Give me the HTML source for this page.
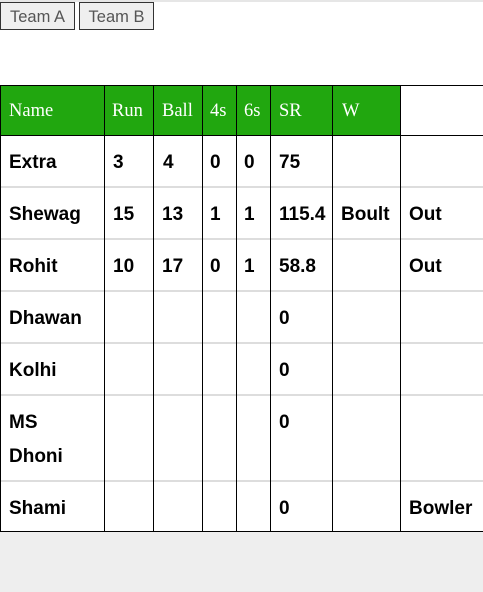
<!DOCTYPE html>
<html><head><style>
html,body{margin:0;padding:0;width:483px;height:592px;background:#eeeeee;overflow:hidden;position:relative;font-family:"Liberation Sans",sans-serif}
#w{position:absolute;left:0;top:0;width:483px;height:532px;background:#fff}
#tl{position:absolute;left:0;top:0;width:483px;height:2px;background:#e6e6e6}
.btn{position:absolute;top:2px;height:26px;border:1px solid #333;background:#efefef;color:#555;font-size:16.5px;line-height:28px;text-align:center;box-sizing:content-box}
.hd{position:absolute;top:86px;height:49px;background:#21a70f}
.v{position:absolute;width:1px;background:#000}
.h{position:absolute;left:0;width:483px}
.t{position:absolute;font-size:19px;font-weight:bold;color:#000;line-height:34px;margin-top:2px}
.s{position:absolute;font-family:"Liberation Serif",serif;color:#fff;font-size:18.5px;top:101px}
</style></head><body>
<div id="w"></div><div id="tl"></div>
<div class="btn" style="left:0;width:73px">Team A</div>
<div class="btn" style="left:79px;width:73px">Team B</div>
<div class="hd" style="left:0;width:400px"></div>
<div class="h" style="top:85px;height:1px;background:#000"></div>
<div class="h" style="top:135px;height:1px;background:#000"></div>
<div class="h" style="top:186px;height:2px;background:#ddd"></div>
<div class="h" style="top:238px;height:2px;background:#ddd"></div>
<div class="h" style="top:290px;height:2px;background:#ddd"></div>
<div class="h" style="top:342px;height:2px;background:#ddd"></div>
<div class="h" style="top:394px;height:2px;background:#ddd"></div>
<div class="h" style="top:480px;height:2px;background:#ddd"></div>
<div class="h" style="top:531px;height:1px;background:#000"></div>
<div class="v" style="left:0;top:85px;height:447px"></div>
<div class="v" style="left:104px;top:85px;height:447px"></div>
<div class="v" style="left:153px;top:85px;height:447px"></div>
<div class="v" style="left:202px;top:85px;height:447px"></div>
<div class="v" style="left:236px;top:85px;height:447px"></div>
<div class="v" style="left:270px;top:85px;height:447px"></div>
<div class="v" style="left:332px;top:85px;height:447px"></div>
<div class="v" style="left:400px;top:85px;height:447px"></div>
<div class="s" style="left:9px">Name</div>
<div class="s" style="left:112px">Run</div>
<div class="s" style="left:162px">Ball</div>
<div class="s" style="left:210px">4s</div>
<div class="s" style="left:244px">6s</div>
<div class="s" style="left:279px">SR</div>
<div class="s" style="left:342px">W</div>

<div class="t" style="left:9px;top:144px">Extra</div>
<div class="t" style="left:113px;top:144px">3</div>
<div class="t" style="left:163px;top:144px">4</div>
<div class="t" style="left:210px;top:144px">0</div>
<div class="t" style="left:244px;top:144px">0</div>
<div class="t" style="left:279px;top:144px">75</div>

<div class="t" style="left:9px;top:196px">Shewag</div>
<div class="t" style="left:113px;top:196px">15</div>
<div class="t" style="left:162px;top:196px">13</div>
<div class="t" style="left:210px;top:196px">1</div>
<div class="t" style="left:244px;top:196px">1</div>
<div class="t" style="left:279px;top:196px">115.4</div>
<div class="t" style="left:341px;top:196px">Boult</div>
<div class="t" style="left:409px;top:196px">Out</div>

<div class="t" style="left:9px;top:248px">Rohit</div>
<div class="t" style="left:113px;top:248px">10</div>
<div class="t" style="left:162px;top:248px">17</div>
<div class="t" style="left:210px;top:248px">0</div>
<div class="t" style="left:244px;top:248px">1</div>
<div class="t" style="left:279px;top:248px">58.8</div>
<div class="t" style="left:409px;top:248px">Out</div>

<div class="t" style="left:9px;top:300px">Dhawan</div>
<div class="t" style="left:279px;top:300px">0</div>
<div class="t" style="left:9px;top:352px">Kolhi</div>
<div class="t" style="left:279px;top:352px">0</div>
<div class="t" style="left:9px;top:404px">MS<br>Dhoni</div>
<div class="t" style="left:279px;top:404px">0</div>
<div class="t" style="left:9px;top:490px">Shami</div>
<div class="t" style="left:279px;top:490px">0</div>
<div class="t" style="left:409px;top:490px">Bowler</div>
</body></html>
